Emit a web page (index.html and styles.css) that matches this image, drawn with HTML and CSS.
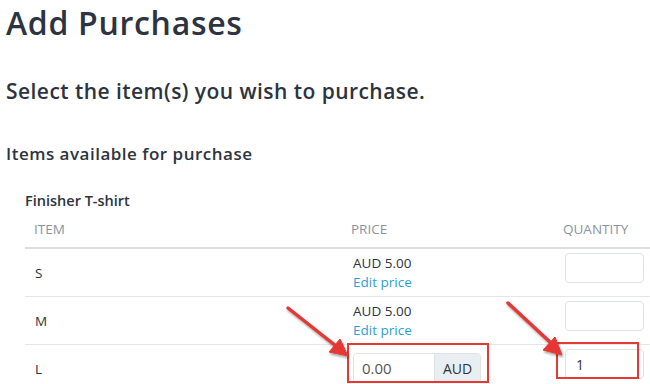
FILE: index.html
```html
<!DOCTYPE html>
<html lang="en">

<head>
    <meta charset="utf-8" />
    <title>Add Purchases</title>
    <link rel="stylesheet" href="styles.css">
</head>

<body>
    <main class="page">
        <h1 class="title">Add Purchases</h1>
        <h2 class="lead">Select the item(s) you wish to purchase.</h2>
        <h3 class="section">Items available for purchase</h3>

        <div class="product">
            <div class="product-name">Finisher T-shirt</div>
            <div class="grid">
                <div class="cell head">ITEM</div>
                <div class="cell head">PRICE</div>
                <div class="cell head qty-head">QUANTITY</div>

                <div class="cell size">S</div>
                <div class="cell price">
                    <span>AUD 5.00</span>
                    <a href="#" class="edit">Edit price</a>
                </div>
                <div class="cell qty"><input class="qty-input" type="text" /></div>

                <div class="cell size">M</div>
                <div class="cell price">
                    <span>AUD 5.00</span>
                    <a href="#" class="edit">Edit price</a>
                </div>
                <div class="cell qty"><input class="qty-input" type="text" /></div>

                <div class="cell size">L</div>
                <div class="cell price">
                    <div class="money">
                        <input class="money-input" type="text" value="0.00" />
                        <span class="money-addon">AUD</span>
                    </div>
                </div>
                <div class="cell qty"><input class="qty-input" type="text" value="1" /></div>
            </div>
        </div>
    </main>

    <!-- annotation layer: red boxes and arrows drawn over the screenshot -->
    <svg class="annotations" width="650" height="384" viewBox="0 0 650 384">
        <defs>
            <filter id="shadow" x="-20%" y="-20%" width="140%" height="140%">
                <feDropShadow dx="1" dy="2" stdDeviation="1.2" flood-color="#000" flood-opacity="0.35" />
            </filter>
        </defs>
        <g fill="none" stroke="#e53935" stroke-width="2">
            <rect x="348" y="344" width="140" height="38" />
            <rect x="557" y="343" width="81" height="35" />
        </g>
        <g filter="url(#shadow)" fill="#e53935" stroke="#e53935">
            <line x1="288" y1="308" x2="336" y2="346" stroke-width="3.5" stroke-linecap="round" />
            <polygon points="348,356 329,352 340,339" />
            <line x1="508" y1="303" x2="551" y2="343" stroke-width="3.5" stroke-linecap="round" />
            <polygon points="562,355 543,350 555,337" />
        </g>
    </svg>
</body>

</html>
```

FILE: styles.css
```css
:root {
    --text: #2d3340;
    --muted: #8a939e;
    --link: #2a9fd8;
    --line: #e4e6e8;
}

* {
    box-sizing: border-box;
}

body {
    margin: 0;
    font-family: "Open Sans", sans-serif;
    color: var(--text);
    background: #fff;
    overflow: hidden;
}

.page {
    padding: 0 0 0 6px;
}

.title {
    margin: 0;
    font-size: 32px;
    font-weight: 600;
    letter-spacing: 0.7px;
    line-height: 45px;
}

.lead {
    margin: 32px 0 0;
    font-size: 21px;
    font-weight: 600;
    letter-spacing: 0.45px;
    line-height: 28px;
}

.section {
    margin: 38px 0 0;
    font-size: 17px;
    font-weight: 600;
    letter-spacing: 0.5px;
    line-height: 22px;
}

.product {
    margin: 26px 0 0 19px;
}

.product-name {
    font-size: 14.5px;
    font-weight: 600;
    line-height: 20px;
}

.grid {
    display: grid;
    grid-template-columns: 317px 211px 97px;
    margin-top: 4px;
}

.cell {
    border-bottom: 1px solid var(--line);
    font-size: 13.5px;
}

.head {
    padding: 5px 0 9px 9px;
    color: var(--muted);
    border-bottom: 2px solid #dcdee0;
    line-height: 18px;
}

.qty-head {
    padding-left: 10px;
}

.size {
    display: flex;
    align-items: center;
    padding-left: 10px;
    height: 48px;
}

.price {
    display: flex;
    flex-direction: column;
    padding: 5px 0 0 11px;
    line-height: 19px;
    height: 48px;
}

.edit {
    color: var(--link);
    text-decoration: none;
}

.qty {
    padding: 4px 0 0 12px;
    height: 48px;
}

.qty-input {
    width: 79px;
    height: 30px;
    border: 1px solid #dfe2e5;
    border-radius: 4px;
    padding: 0 10px;
    font: inherit;
    font-size: 14px;
    color: #333;
}

.money {
    display: flex;
    width: 128px;
    height: 30px;
    margin-top: 3px;
    border: 1px solid #dfe2e5;
    border-radius: 4px;
    overflow: hidden;
}

.money-input {
    width: 80px;
    border: none;
    padding: 0 8px;
    font: inherit;
    font-size: 15px;
    color: #555;
}

.money-addon {
    flex: 1;
    display: flex;
    align-items: center;
    justify-content: center;
    background: #e9eef2;
    border-left: 1px solid #dfe2e5;
    font-size: 14px;
}

.annotations {
    position: absolute;
    top: 0;
    left: 0;
    pointer-events: none;
}
```
